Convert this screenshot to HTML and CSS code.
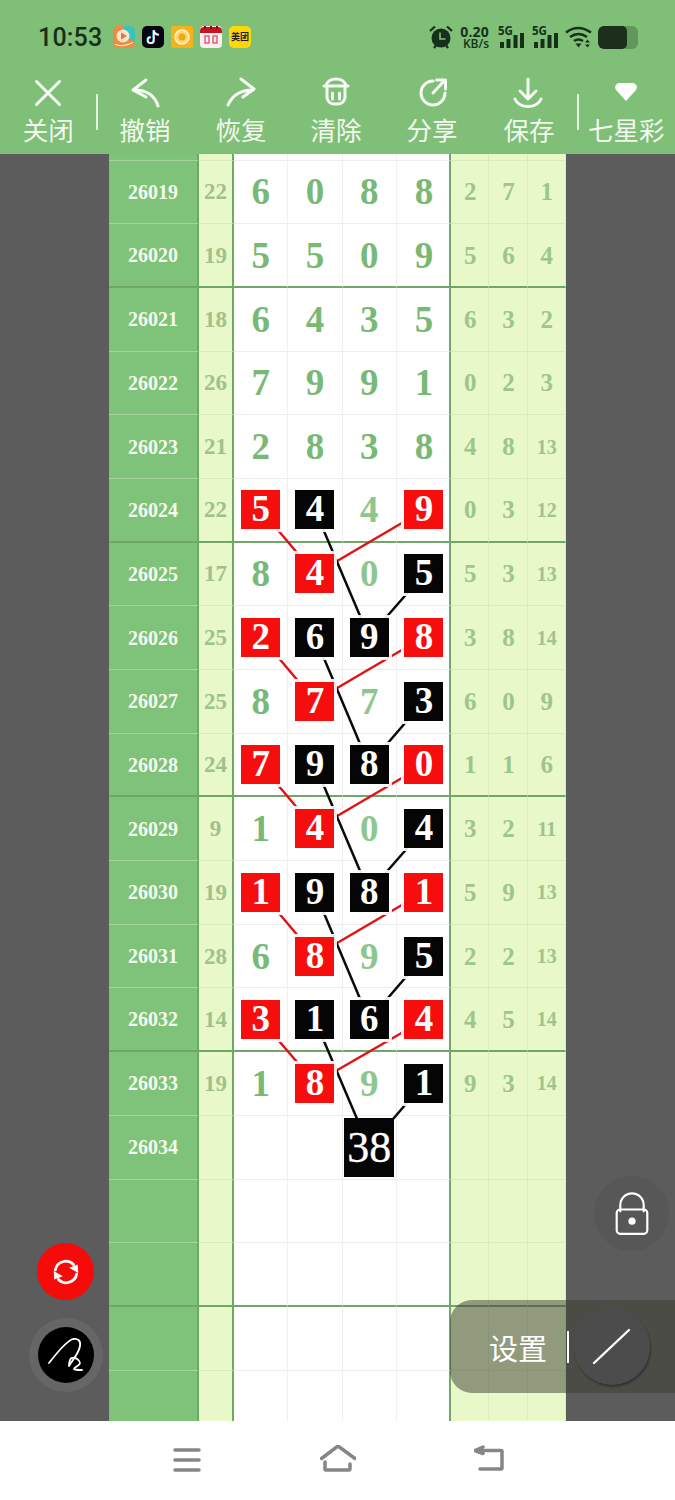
FILE: index.html
```html
<!DOCTYPE html>
<html lang="zh-CN">
<head>
    <meta charset="UTF-8">
    <meta name="viewport" content="width=device-width, initial-scale=1.0">
    <title>七星彩</title>
    <link rel="stylesheet" href="styles.css">
</head>
<body>
    <header class="top">
        <div class="status">
            <span class="time">10:53</span>
            <div class="apps">
                <svg class="app" viewBox="0 0 22 22"><rect width="22" height="22" rx="5" fill="#f08a3c"/><path d="M11 0h6a5 5 0 0 1 5 5v11L11 9z" fill="#35c4c0"/><circle cx="10" cy="10" r="6.500" fill="#fbe6d2"/><path d="M8 6.500l6 3.500-6 3.500z" fill="#f0703c"/><path d="M2 18q9 3 18-2v1q-9 5-18 2z" fill="#fff"/></svg>
                <svg class="app" viewBox="0 0 22 22"><rect width="22" height="22" rx="5" fill="#0a0514"/><path d="M11.500 4v10a3 3 0 1 1-3-3M11.500 4q.5 4 5 4.500" fill="none" stroke="#25e0e8" stroke-width="2.200"/><path d="M12.200 4.600v10a3 3 0 1 1-3-3M12.200 4.600q.5 4 5 4.500" fill="none" stroke="#f0305c" stroke-width="1.200"/><path d="M11.800 4.300v10a3 3 0 1 1-3-3M11.800 4.300q.5 4 5 4.500" fill="none" stroke="#fff" stroke-width="1.600"/></svg>
                <svg class="app" viewBox="0 0 22 22"><rect width="22" height="22" rx="2" fill="#f5b21a"/><circle cx="11" cy="11" r="7" fill="#fbd873" stroke="#fff3c8" stroke-width="1.500"/><circle cx="11" cy="11" r="3.500" fill="#f0a810"/></svg>
                <svg class="app" viewBox="0 0 22 22"><rect width="22" height="22" rx="4" fill="#fbeff0"/><path d="M0 5a4 4 0 0 1 4-4h14a4 4 0 0 1 4 4v2H0z" fill="#c81420"/><path d="M4 0h2v3H4zM10 0h2v3h-2zM16 0h2v3h-2z" fill="#8a0c14"/><path d="M5 10h4v7H5zM13 10h4v7h-4z" fill="none" stroke="#e0607c" stroke-width="1.500"/></svg>
                <span class="app meituan">美团</span>
            </div>
            <div class="sys">
                <svg class="alarm" viewBox="0 0 24 24"><path d="M1 6l5-4.500M23 6l-5-4.500M5 23l2.500-3.500M19 23l-2.500-3.500" stroke="#16301a" stroke-width="2.200" fill="none"/><circle cx="12" cy="13" r="9.500" fill="#16301a"/><path d="M11 7.500v6.500h5.500" stroke="#7fbf77" stroke-width="1.600" fill="none"/></svg>
                <div class="speed"><b>0.20</b><span>KB/s</span></div>
                <div class="signal"><i>5G</i><svg viewBox="0 0 24 15"><path d="M0 9h4v6H0zM6.500 6h4v9h-4zM13.500 2h4v13h-4zM20 0h4v15h-4z" fill="#16301a"/></svg></div>
                <div class="signal"><i>5G</i><svg viewBox="0 0 24 15"><path d="M0 9h4v6H0zM6.500 6h4v9h-4zM13.500 2h4v13h-4zM20 0h4v15h-4z" fill="#16301a"/></svg></div>
                <svg class="wifi" viewBox="0 0 27 22"><path d="M1 6.500q12-9 25 0M5 11q8.500-6 17 0M9 15q4.500-3 9 0" fill="none" stroke="#16301a" stroke-width="2.600"/><path d="M10.500 17.500h6L13.500 21.500z" fill="#16301a"/><path d="M22.500 13.500l2.500 3h-5zM22.500 21.500l2.500-3h-5z" fill="#16301a"/></svg>
                <div class="battery"><span></span></div>
            </div>
        </div>
        <nav class="tools">
            <div class="tool split">
                <svg viewBox="0 0 40 40"><path d="M8.500 9.500l23 23M31.500 9.500l-23 23"/></svg>
                <span>关闭</span>
            </div>
            <div class="tool">
                <svg viewBox="0 0 40 40"><path d="M21 8L8 18l13 7M9 18c13 0 21 6 24 16"/></svg>
                <span>撤销</span>
            </div>
            <div class="tool">
                <svg viewBox="0 0 40 40"><path d="M20 7l13 10-11 8M7 33c4-9 12-15 25-15"/></svg>
                <span>恢复</span>
            </div>
            <div class="tool">
                <svg viewBox="0 0 40 40"><path d="M8 14h24M10 14c1-5 6-7 10-7s9 2 10 7M11 14v11a7 7 0 0 0 7 7h4a7 7 0 0 0 7-7V14M16.500 21v6M23.500 21v6"/></svg>
                <span>清除</span>
            </div>
            <div class="tool">
                <svg viewBox="0 0 40 40"><path d="M21 9a12 12 0 1 0 12 12M21 21L33 8M24.500 8H33.500V17"/></svg>
                <span>分享</span>
            </div>
            <div class="tool split">
                <svg viewBox="0 0 40 40"><path d="M19 7v19M11 19l8 8 8-8M6 27c4 10 22 10 26 0"/></svg>
                <span>保存</span>
            </div>
            <div class="tool">
                <svg viewBox="0 0 40 40"><path class="solid" d="M20 29L10.500 18.500c-3-3.500-.5-7.500 3-7.500h13c3.500 0 6 4 3 7.500z"/></svg>
                <span>七星彩</span>
            </div>
        </nav>
    </header>

    <main class="board">
        <table class="chart">
            <colgroup>
                <col class="c-no"><col class="c-sum">
                <col class="c-main"><col class="c-main"><col class="c-main"><col class="c-main">
                <col class="c-tail"><col class="c-tail"><col class="c-tail">
            </colgroup>
            <tr class="lead"><th></th><td class="sum"></td><td></td><td></td><td></td><td class="end"></td><td class="tail"></td><td class="tail"></td><td class="tail"></td></tr>
            <tr><th>26019</th><td class="sum">22</td><td>6</td><td>0</td><td>8</td><td class="end">8</td><td class="tail">2</td><td class="tail">7</td><td class="tail">1</td></tr>
            <tr class="thick"><th>26020</th><td class="sum">19</td><td>5</td><td>5</td><td>0</td><td class="end">9</td><td class="tail">5</td><td class="tail">6</td><td class="tail">4</td></tr>
            <tr><th>26021</th><td class="sum">18</td><td>6</td><td>4</td><td>3</td><td class="end">5</td><td class="tail">6</td><td class="tail">3</td><td class="tail">2</td></tr>
            <tr><th>26022</th><td class="sum">26</td><td>7</td><td>9</td><td>9</td><td class="end">1</td><td class="tail">0</td><td class="tail">2</td><td class="tail">3</td></tr>
            <tr><th>26023</th><td class="sum">21</td><td>2</td><td>8</td><td>3</td><td class="end">8</td><td class="tail">4</td><td class="tail">8</td><td class="tail small">13</td></tr>
            <tr class="thick"><th>26024</th><td class="sum">22</td><td><b class="red">5</b></td><td><b class="black">4</b></td><td class="dim">4</td><td class="end"><b class="red">9</b></td><td class="tail">0</td><td class="tail">3</td><td class="tail small">12</td></tr>
            <tr><th>26025</th><td class="sum">17</td><td>8</td><td><b class="red">4</b></td><td class="dim">0</td><td class="end"><b class="black">5</b></td><td class="tail">5</td><td class="tail">3</td><td class="tail small">13</td></tr>
            <tr><th>26026</th><td class="sum">25</td><td><b class="red">2</b></td><td><b class="black">6</b></td><td><b class="black">9</b></td><td class="end"><b class="red">8</b></td><td class="tail">3</td><td class="tail">8</td><td class="tail small">14</td></tr>
            <tr><th>26027</th><td class="sum">25</td><td>8</td><td><b class="red">7</b></td><td class="dim">7</td><td class="end"><b class="black">3</b></td><td class="tail">6</td><td class="tail">0</td><td class="tail">9</td></tr>
            <tr class="thick"><th>26028</th><td class="sum">24</td><td><b class="red">7</b></td><td><b class="black">9</b></td><td><b class="black">8</b></td><td class="end"><b class="red">0</b></td><td class="tail">1</td><td class="tail">1</td><td class="tail">6</td></tr>
            <tr><th>26029</th><td class="sum">9</td><td>1</td><td><b class="red">4</b></td><td class="dim">0</td><td class="end"><b class="black">4</b></td><td class="tail">3</td><td class="tail">2</td><td class="tail small">11</td></tr>
            <tr><th>26030</th><td class="sum">19</td><td><b class="red">1</b></td><td><b class="black">9</b></td><td><b class="black">8</b></td><td class="end"><b class="red">1</b></td><td class="tail">5</td><td class="tail">9</td><td class="tail small">13</td></tr>
            <tr><th>26031</th><td class="sum">28</td><td>6</td><td><b class="red">8</b></td><td class="dim">9</td><td class="end"><b class="black">5</b></td><td class="tail">2</td><td class="tail">2</td><td class="tail small">13</td></tr>
            <tr class="thick"><th>26032</th><td class="sum">14</td><td><b class="red">3</b></td><td><b class="black">1</b></td><td><b class="black">6</b></td><td class="end"><b class="red">4</b></td><td class="tail">4</td><td class="tail">5</td><td class="tail small">14</td></tr>
            <tr><th>26033</th><td class="sum">19</td><td>1</td><td><b class="red">8</b></td><td class="dim">9</td><td class="end"><b class="black">1</b></td><td class="tail">9</td><td class="tail">3</td><td class="tail small">14</td></tr>
            <tr><th>26034</th><td class="sum"></td><td></td><td></td><td><b class="total">38</b></td><td class="end"></td><td class="tail"></td><td class="tail"></td><td class="tail"></td></tr>
            <tr><th></th><td class="sum"></td><td></td><td></td><td></td><td class="end"></td><td class="tail"></td><td class="tail"></td><td class="tail"></td></tr>
            <tr class="thick"><th></th><td class="sum"></td><td></td><td></td><td></td><td class="end"></td><td class="tail"></td><td class="tail"></td><td class="tail"></td></tr>
            <tr><th></th><td class="sum"></td><td></td><td></td><td></td><td class="end"></td><td class="tail"></td><td class="tail"></td><td class="tail"></td></tr>
            <tr><th></th><td class="sum"></td><td></td><td></td><td></td><td class="end"></td><td class="tail"></td><td class="tail"></td><td class="tail"></td></tr>
        </table>

        <!-- connecting lines run under the number squares, in page coordinates -->
        <svg class="links" viewBox="109 154 457 1267">
            <g class="link-red">
                <path d="M261 510L315 574M424 510L315 574"/>
                <path d="M261 637L315 701M424 637L315 701"/>
                <path d="M261 765L315 829M424 765L315 829"/>
                <path d="M261 892L315 956M424 892L315 956"/>
                <path d="M261 1020L315 1083M424 1020L315 1083"/>
            </g>
            <g class="link-black">
                <path d="M315 510L369 637M424 574L369 637"/>
                <path d="M315 637L369 765M424 701L369 765"/>
                <path d="M315 765L369 892M424 829L369 892"/>
                <path d="M315 892L369 1020M424 956L369 1020"/>
                <path d="M315 1020L369 1147M424 1083L369 1147"/>
            </g>
        </svg>

        <button class="fab fab-sync" type="button">
            <svg viewBox="0 0 30 30"><path d="M5 13a10 10 0 0 1 17-5M25 17a10 10 0 0 1-17 5"/><path class="solid" d="M18 11l8-3 .5 8zM12 19l-8 3-.5-8z"/></svg>
        </button>
        <button class="fab fab-pen" type="button">
            <svg viewBox="0 0 56 56"><path d="M11 36C18 27 28 14 35 12c5-1 8 2 7 7-1 7-8 15-11 20 0-3 1-8 3-8 3-1 8 2 8 5 0 3-5 3-6 6 1 1 5 1 8 1"/></svg>
        </button>
        <button class="fab fab-lock" type="button">
            <svg viewBox="0 0 40 50"><path d="M7 22v-7a13 13 0 0 1 26 0v7"/><rect x="3" y="20" width="34" height="27" rx="4"/><circle class="solid" cx="20" cy="33" r="4"/></svg>
        </button>
        <div class="settings">
            <span class="settings-label">设置</span>
            <span class="settings-bar"></span>
            <span class="settings-line">
                <svg viewBox="0 0 76 76"><path d="M20 54L55 21"/></svg>
            </span>
        </div>
    </main>

    <footer class="navbar">
        <svg class="nav-menu" viewBox="0 0 30 24"><path d="M3 2h24M3 12h24M3 22h24"/></svg>
        <svg class="nav-home" viewBox="0 0 36 28"><path d="M1.500 13.500L18 1l17 12.500M5 17v7q0 1 1 1h23q1 0 1-2v-4"/></svg>
        <svg class="nav-back" viewBox="0 0 32 28"><path d="M9 2L1 5.500l8 3M2 5.500h25q1 0 1 1V23q0 1-1 1H6"/></svg>
    </footer>
</body>
</html>
```

FILE: styles.css
```css
* {
    box-sizing: border-box;
}

body {
    margin: 0;
    width: 675px;
    height: 1500px;
    overflow: hidden;
    display: flex;
    flex-direction: column;
    background: #fff;
    font-family: "Noto Sans CJK SC", "Noto Sans", sans-serif;
}

/* header */
.top {
    height: 154px;
    background: #7fbf77;
}

.status {
    height: 72px;
    padding: 26px 37px 0 38px;
    display: flex;
    align-items: flex-start;
    color: #16301a;
}

.time {
    font-family: Roboto, sans-serif;
    font-size: 25px;
    font-weight: 500;
    line-height: 24px;
    width: 75px;
    letter-spacing: 0.2px;
}

.apps {
    display: flex;
    gap: 7px;
}

.app {
    width: 22px;
    height: 22px;
    display: block;
}

.meituan {
    background: #ffd60a;
    border-radius: 5px;
    color: #222;
    font-size: 9px;
    font-weight: 700;
    line-height: 22px;
    text-align: center;
    white-space: nowrap;
}

.sys {
    margin-left: auto;
    display: flex;
    align-items: flex-start;
}

.alarm {
    width: 24px;
    height: 24px;
    margin-top: -1px;
}

.speed {
    width: 29px;
    margin-left: 7px;
    font-family: "Open Sans", sans-serif;
    display: flex;
    flex-direction: column;
    align-items: flex-end;
}

.speed b {
    font-size: 14px;
    line-height: 12px;
    letter-spacing: 0.2px;
}

.speed span {
    font-size: 12px;
    font-weight: 600;
    line-height: 10px;
    margin-top: 1px;
}

.signal {
    position: relative;
    width: 26px;
    height: 22px;
    margin-left: 11px;
}

.signal i {
    position: absolute;
    left: -2px;
    top: 0;
    font-family: "Open Sans", sans-serif;
    font-style: normal;
    font-size: 11.500px;
    font-weight: 700;
    line-height: 9px;
}

.signal svg {
    position: absolute;
    left: 0;
    bottom: 0;
    width: 24px;
    height: 15px;
}

.signal + .signal {
    margin-left: 8px;
}

.wifi {
    width: 27px;
    height: 22px;
    margin-left: 5px;
}

.battery {
    width: 40px;
    height: 23px;
    margin-left: 6px;
    border-radius: 6px;
    background: #5f9858;
    overflow: hidden;
}

.battery span {
    display: block;
    width: 29px;
    height: 100%;
    background: #1c2e1c;
    border-radius: 5px;
}

.tools {
    display: grid;
    grid-template-columns: 96.500px 97px 95px 95px 97px 97px 1fr;
}

.tool {
    position: relative;
    height: 82px;
    display: flex;
    flex-direction: column;
    align-items: center;
    color: #f2f9ee;
}

.tool svg {
    width: 40px;
    height: 40px;
    fill: none;
    stroke: #f6fbf3;
    stroke-width: 3;
    stroke-linecap: round;
    stroke-linejoin: round;
}

.tool .solid {
    fill: #fff;
    stroke: none;
}

.tool span {
    font-size: 25.500px;
    line-height: 36px;
    margin-top: -1px;
    white-space: nowrap;
}

.tool.split::after {
    content: "";
    position: absolute;
    right: -1.500px;
    top: 22px;
    width: 2px;
    height: 36px;
    background: #e4f3df;
}

/* chart */
.board {
    position: relative;
    flex: 1;
    overflow: hidden;
    background: #5c5c5c;
}

.chart {
    margin-left: 109px;
    width: 457px;
    table-layout: fixed;
    border-collapse: separate;
    border-spacing: 0;
    font-family: "Liberation Serif", serif;
    font-weight: 700;
}

.c-no { width: 90px; }
.c-sum { width: 35px; }
.c-main { width: 54.250px; }
.c-tail { width: 38.330px; }

.chart tr {
    height: 63.700px;
}

.chart tr.lead {
    height: 6.500px;
}

.chart th,
.chart td {
    padding: 0;
    text-align: center;
    vertical-align: middle;
    line-height: 1;
    background: #fff;
    border-bottom: 1px solid #ececec;
    border-right: 1px solid #f0f0f0;
    font-size: 37px;
    color: #78b976;
}

.chart th {
    background: #7fc27a;
    border-bottom: 1px solid #a2d49b;
    border-right: 2px solid #6fa866;
    font-size: 20px;
    color: #f4fbef;
}

.chart .sum {
    background: #e8f8c8;
    border-bottom-color: #dbeabd;
    border-right: 2px solid #6fa866;
    font-size: 23px;
    color: #a0c18e;
}

.chart .end {
    border-right: 2px solid #6fa866;
    padding-left: 2px;
}

.chart .tail {
    background: #e8f8c8;
    border-bottom-color: #dbeabd;
    border-right-color: #dcecbc;
    padding-left: 1px;
    font-size: 25px;
    color: #9fc48d;
}

.chart .tail.small {
    font-size: 20px;
}

.chart .dim {
    color: #8ec78d;
}

.chart tr.thick th,
.chart tr.thick td {
    border-bottom: 2px solid #6fa866;
}

.chart tr.lead th {
    border-bottom-color: #a2d49b;
}

/* number squares sit above the link lines */
.chart b {
    position: relative;
    z-index: 2;
    display: block;
    width: 39px;
    height: 39px;
    margin: 0 auto;
    line-height: 38px;
    color: #fff;
    outline: 3px solid rgba(255, 255, 255, 0.9);
}

.chart b.red {
    background: #f60e0e;
}

.chart b.black {
    background: #050505;
}

.chart b.total {
    width: 50px;
    height: 59px;
    line-height: 59px;
    background: #050505;
    font-size: 44px;
    font-weight: 400;
    -webkit-text-stroke: 0.3px #fff;
    outline: none;
}

.links {
    position: absolute;
    left: 109px;
    top: 0;
    width: 457px;
    height: 1267px;
    z-index: 1;
    fill: none;
    stroke-width: 2.500;
}

.link-red {
    stroke: #e01414;
}

.link-black {
    stroke: #0a0a0a;
}

/* floating buttons */
.fab {
    position: absolute;
    z-index: 3;
    padding: 0;
    border: none;
    border-radius: 50%;
    display: flex;
    align-items: center;
    justify-content: center;
}

.fab svg {
    fill: none;
    stroke: #fff;
    stroke-linecap: round;
    stroke-linejoin: round;
}

.fab svg .solid {
    fill: #fff;
    stroke: none;
}

.fab-sync {
    left: 37px;
    top: 1089px;
    width: 57px;
    height: 57px;
    background: #f60a0a;
}

.fab-sync svg {
    width: 32px;
    height: 32px;
    stroke-width: 2.600;
}

.fab-pen {
    left: 38px;
    top: 1173px;
    width: 56px;
    height: 56px;
    background: #000;
    box-shadow: 0 0 0 9px #666;
}

.fab-pen svg {
    width: 56px;
    height: 56px;
    stroke-width: 1.800;
}

.fab-lock {
    left: 594px;
    top: 1022px;
    width: 75px;
    height: 75px;
    background: #575757;
}

.fab-lock svg {
    width: 36px;
    height: 46px;
    stroke-width: 2.400;
}

.settings {
    position: absolute;
    z-index: 3;
    left: 450px;
    top: 1146px;
    width: 225px;
    height: 93px;
    border-radius: 22px 0 0 22px;
    background: rgba(60, 60, 50, 0.5);
    display: flex;
    align-items: center;
    color: #fff;
}

.settings-label {
    margin-left: 39px;
    font-size: 29px;
    line-height: 40px;
}

.settings-bar {
    width: 2px;
    height: 32px;
    margin-left: 20px;
    background: #fff;
}

.settings-line {
    width: 76px;
    height: 76px;
    margin-left: 5px;
    border-radius: 50%;
    background: #4c4c4c;
    box-shadow: 1px 2px 2px rgba(0, 0, 0, 0.35);
}

.settings-line svg {
    display: block;
    width: 76px;
    height: 76px;
    stroke: #fff;
    stroke-width: 2.400;
    stroke-linecap: round;
}

/* bottom nav */
.navbar {
    height: 79px;
    background: #fff;
    display: flex;
    align-items: flex-start;
}

.navbar svg {
    fill: none;
    stroke: #868686;
    stroke-width: 3.500;
    stroke-linecap: round;
    stroke-linejoin: round;
}

.nav-menu {
    width: 30px;
    height: 24px;
    margin: 27px 0 0 172px;
}

.nav-home {
    width: 36px;
    height: 28px;
    margin: 24px 0 0 118px;
}

.nav-back {
    width: 32px;
    height: 28px;
    margin: 24px 0 0 118px;
}

.nav-home,
.nav-back {
    stroke-width: 3;
}
```
